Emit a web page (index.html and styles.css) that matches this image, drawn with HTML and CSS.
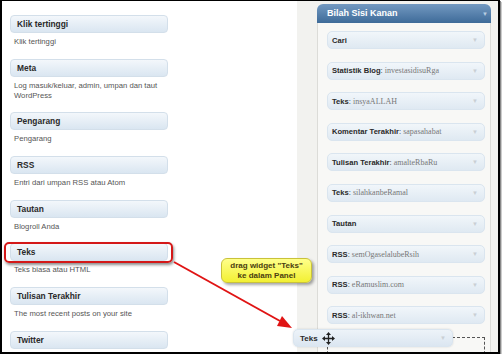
FILE: index.html
```html
<!DOCTYPE html>
<html lang="en">
<head>
    <meta charset="UTF-8">
    <link rel="stylesheet" href="styles.css">
</head>
<body>
<div class="frame">

    <div class="available">
        <div class="widget">
            <div class="widget-top">Klik tertinggi</div>
            <p class="desc">Klik tertinggi</p>
        </div>
        <div class="widget">
            <div class="widget-top">Meta</div>
            <p class="desc">Log masuk/keluar, admin, umpan dan taut WordPress</p>
        </div>
        <div class="widget">
            <div class="widget-top">Pengarang</div>
            <p class="desc">Pengarang</p>
        </div>
        <div class="widget">
            <div class="widget-top">RSS</div>
            <p class="desc">Entri dari umpan RSS atau Atom</p>
        </div>
        <div class="widget">
            <div class="widget-top">Tautan</div>
            <p class="desc">Blogroll Anda</p>
        </div>
        <div class="widget">
            <div class="widget-top marked">Teks</div>
            <p class="desc">Teks biasa atau HTML</p>
        </div>
        <div class="widget">
            <div class="widget-top">Tulisan Terakhir</div>
            <p class="desc">The most recent posts on your site</p>
        </div>
        <div class="widget">
            <div class="widget-top">Twitter</div>
            <p class="desc">&nbsp;</p>
        </div>
    </div>

    <div class="sidebars">
        <div class="sidebar">
            <div class="sidebar-name">Bilah Sisi Kanan <span class="arrow">&#9660;</span></div>
            <div class="sidebar-body">
                <div class="item"><b>Cari</b><span class="arrow">&#9660;</span></div>
                <div class="item"><b>Statistik Blog</b>: <i>investasidisuRga</i><span class="arrow">&#9660;</span></div>
                <div class="item"><b>Teks</b>: <i>insyaALLAH</i><span class="arrow">&#9660;</span></div>
                <div class="item"><b>Komentar Terakhir</b>: <i>sapasahabat</i><span class="arrow">&#9660;</span></div>
                <div class="item"><b>Tulisan Terakhir</b>: <i>amalteRbaRu</i><span class="arrow">&#9660;</span></div>
                <div class="item"><b>Teks</b>: <i>silahkanbeRamal</i><span class="arrow">&#9660;</span></div>
                <div class="item"><b>Tautan</b><span class="arrow">&#9660;</span></div>
                <div class="item"><b>RSS</b>: <i>semOgaselalubeRsih</i><span class="arrow">&#9660;</span></div>
                <div class="item"><b>RSS</b>: <i>eRamuslim.com</i><span class="arrow">&#9660;</span></div>
                <div class="item"><b>RSS</b>: <i>al-ikhwan.net</i><span class="arrow">&#9660;</span></div>
                <div class="placeholder"></div>
            </div>
        </div>
    </div>

    <!-- annotation drawn over the screenshot -->
    <svg class="pointer" width="502" height="356" viewBox="0 0 502 356">
        <line x1="172" y1="261" x2="278" y2="320" stroke="#e01414" stroke-width="2"/>
        <polygon points="290,327 275,325 280,315" fill="#e01414"/>
    </svg>

    <div class="callout">drag widget "Teks"<br>ke dalam Panel</div>

    <div class="item dragging">
        <b>Teks</b>
        <svg class="move" width="13" height="13" viewBox="0 0 13 13">
            <path d="M6.5 2 V11 M2 6.5 H11" stroke="#222" stroke-width="1.3"/>
            <polygon points="6.5,0 4,3 9,3" fill="#222"/>
            <polygon points="6.5,13 4,10 9,10" fill="#222"/>
            <polygon points="0,6.5 3,4 3,9" fill="#222"/>
            <polygon points="13,6.5 10,4 10,9" fill="#222"/>
        </svg>
        <span class="arrow">&#9660;</span>
    </div>

</div>
</body>
</html>
```

FILE: styles.css
```css
body {
    margin: 0;
    padding: 0;
    font-family: 'Liberation Sans', Arial, sans-serif;
    background-color: #fff;
}

.frame {
    position: relative;
    width: 500px;
    height: 354px;
    box-sizing: border-box;
    border: 1px solid #000;
    border-left-width: 2px;
    border-right-width: 2px;
    border-bottom-width: 2px;
    box-shadow: 1px 1px 0 #888, 2px 2px 0 #ccc;
    overflow: hidden;
    display: flex;
    background-color: #fff;
}

/* left column: available widgets */
.available {
    width: 295px;
    padding: 14px 0 0 8px;
    box-sizing: border-box;
}

.widget {
    width: 158px;
}

.widget-top {
    position: relative;
    height: 18px;
    box-sizing: border-box;
    padding-left: 6px;
    line-height: 16px;
    font-size: 8.4px;
    font-weight: bold;
    color: #2a2a2a;
    border: 1px solid #d3dfea;
    border-radius: 4px;
    background: linear-gradient(#f3f7fb, #dae6f1);
}

.widget-top.marked::after {
    content: "";
    position: absolute;
    top: -2px;
    bottom: -3px;
    left: -7px;
    right: -6px;
    border: 2px solid #d41818;
    border-radius: 5px;
    box-shadow: 1px 2px 3px rgba(0, 0, 0, 0.45);
}

.desc {
    margin: 4px 0 11.7px 0;
    padding: 0 2px 0 4px;
    font-size: 7.7px;
    line-height: 10px;
    color: #555;
}

/* right column: sidebar panel */
.sidebars {
    flex: 1;
    background-color: #f2f2ef;
    padding: 3px 7px 0 20px;
}

.sidebar-name {
    position: relative;
    height: 19px;
    padding-left: 10px;
    line-height: 19px;
    font-size: 9px;
    font-weight: bold;
    color: #fff;
    border-radius: 6px 6px 0 0;
    background: linear-gradient(#7399c1, #3e6b99);
}

.sidebar-name .arrow {
    right: 3px;
    color: #b8cde2;
}

.sidebar-body {
    border: 1px solid #dcdcd8;
    border-top: none;
    background-color: #f8f8f6;
    padding: 8px 5px 0 9px;
}

.item {
    position: relative;
    height: 18px;
    box-sizing: border-box;
    margin-bottom: 12.6px;
    padding-left: 4px;
    display: flex;
    align-items: center;
    font-size: 7.6px;
    color: #2a2a2a;
    border: 1px solid #dae5ef;
    border-radius: 5px;
    background: linear-gradient(#f1f6fa, #dfe9f2);
    white-space: pre;
}

.item i {
    font-family: 'Liberation Serif', 'Times New Roman', serif;
    font-style: normal;
    font-size: 8px;
    color: #777;
}

.arrow {
    position: absolute;
    right: 6px;
    top: 50%;
    transform: translateY(-50%);
    font-size: 6px;
    color: #c9cfd4;
}

.placeholder {
    height: 40px;
    border: 1px dashed #555;
    border-bottom: none;
}

/* annotation overlays */
.pointer {
    position: absolute;
    left: 0;
    top: 0;
    pointer-events: none;
}

.callout {
    position: absolute;
    left: 219px;
    top: 257px;
    width: 91px;
    height: 25px;
    box-sizing: border-box;
    padding-top: 2px;
    text-align: center;
    font-size: 8px;
    font-weight: bold;
    line-height: 10px;
    color: #4a3d10;
    border: 1px solid #c9c23a;
    border-radius: 6px;
    background: linear-gradient(#ffff8a, #f2f033);
    box-shadow: 2px 2px 3px rgba(0, 0, 0, 0.35);
}

.dragging {
    position: absolute;
    left: 291px;
    top: 328px;
    width: 160px;
    margin: 0;
    padding-left: 6px;
    font-size: 8px;
    background: linear-gradient(#edf3f9, #dbe6f1);
    box-shadow: 0 0 2px rgba(0, 0, 0, 0.15);
}

.dragging .move {
    margin-left: 4px;
}
```
